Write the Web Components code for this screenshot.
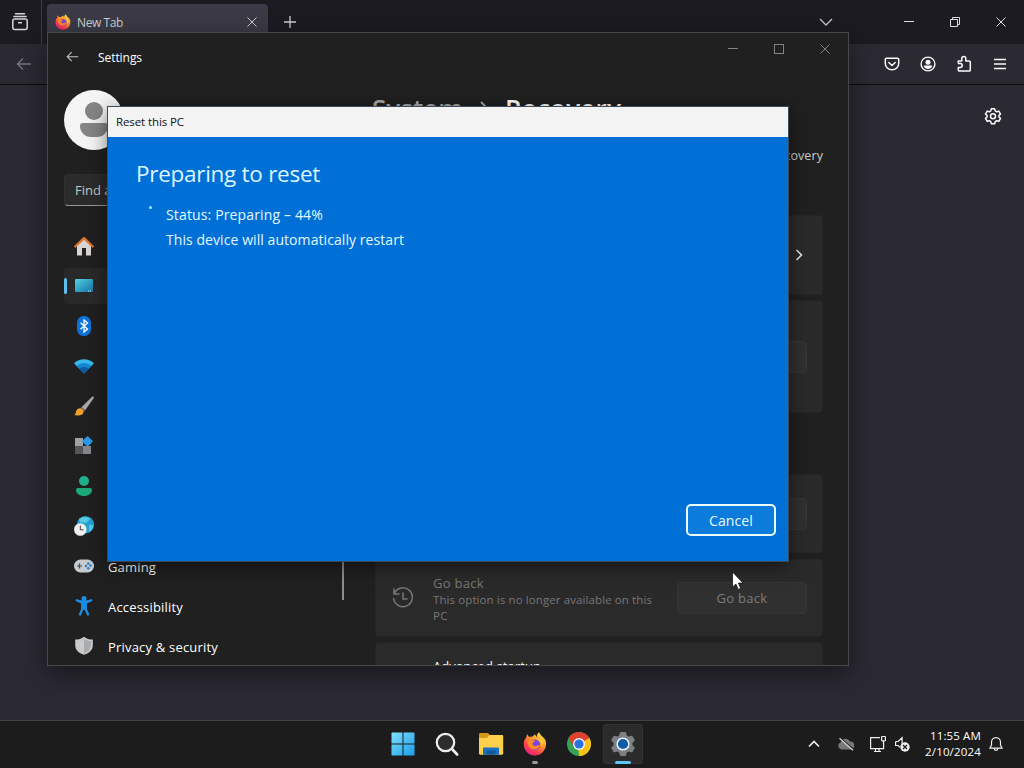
<!DOCTYPE html>
<html lang="en">
<head>
<meta charset="utf-8">
<title>Reset this PC</title>
<style>
  html, body { margin: 0; height: 100%; overflow: hidden; background: #2b2a33; }
  body { font-family: "Open Sans", "Noto Sans", sans-serif; font-size: 13px; color: #fff; }
</style>
</head>
<body>
<desk-top></desk-top>

<script>
const ICONS = {
  // browser chrome
  library: [18, 18, `<g fill="none" stroke="#d5d5da" stroke-width="1.5"><rect x="1.8" y="6" width="14.4" height="10.6" rx="2"/><path d="M3 3.500h12M4.500.8h9" stroke-linecap="round"/><path d="M7 9.700h4"/></g>`],
  back: [16, 14, `<path d="M15 7H1.500M7 1.500 1.500 7 7 12.500" fill="none" stroke="currentColor" stroke-width="1.300"/>`],
  close: [12, 12, `<path d="M1.500 1.500l9 9M10.500 1.500l-9 9" fill="none" stroke="currentColor"/>`],
  plus: [14, 14, `<path d="M7 1v12M1 7h12" fill="none" stroke="#d0d0d5" stroke-width="1.300"/>`],
  down: [14, 8, `<path d="M1 1l6 6 6-6" fill="none" stroke="#c8c8cd" stroke-width="1.300"/>`],
  min: [10, 10, `<path d="M0 4.500h10" stroke="currentColor"/>`],
  max: [10, 10, `<rect x=".5" y=".5" width="9" height="9" fill="none" stroke="currentColor"/>`],
  restore: [10, 10, `<path d="M.5 2.500h7v7h-7zM2.500 2.500v-2h7v7h-2" fill="none" stroke="currentColor"/>`],
  pocket: [16, 16, `<g fill="none" stroke="#fbfbfe" stroke-width="1.500" stroke-linecap="round" stroke-linejoin="round"><path d="M2.600 2.200h10.800c.7 0 1.300.6 1.300 1.300V7.500a6.700 6.300 0 0 1-13.400 0v-4c0-.7.6-1.300 1.300-1.300z"/><path d="M4.800 6.500 8 9.500l3.200-3"/></g>`],
  account: [16, 16, `<circle cx="8" cy="8" r="6.900" fill="none" stroke="#fbfbfe" stroke-width="1.400"/><circle cx="8" cy="6.200" r="2.500" fill="#fbfbfe"/><path d="M3.700 9.500h8.600c-.3 2.200-2.200 3.500-4.300 3.500S4 11.700 3.700 9.500z" fill="#fbfbfe"/>`],
  puzzle: [16, 18, `<path d="M2.300 8.500V5.900h3.500V3.500a2 2 0 0 1 4 0v2.400h3.300c.7 0 1.200.5 1.200 1.200v7.800c0 .7-.5 1.200-1.200 1.200H3.500c-.7 0-1.200-.5-1.200-1.200v-2.500h2a1.900 1.900 0 0 0 0-3.800H1.900" fill="none" stroke="#fbfbfe" stroke-width="1.500" stroke-linejoin="round"/>`],
  menu: [14, 12, `<path d="M1 1.500h12M1 6h12M1 10.500h12" stroke="#fbfbfe" stroke-width="1.400"/>`],
  gear: [18, 18, `<g fill="none" stroke="#fbfbfe" stroke-width="1.500" stroke-linejoin="round"><path d="M7.300 1.800h3.400l.5 2.100 1.500.9 2.100-.7 1.700 3-1.600 1.400v1.500l1.600 1.400-1.700 3-2.100-.7-1.500.9-.5 2.100H7.300l-.5-2.100-1.500-.9-2.100.7-1.700-3L3.100 10V8.500L1.500 7.100l1.700-3 2.100.7 1.500-.9z"/><circle cx="9" cy="9.200" r="2.500"/></g>`],
  firefox: [24, 24, `
    <defs><linearGradient id="f" x1=".85" y1="0" x2=".2" y2="1"><stop offset="0" stop-color="#ffe64d"/><stop offset=".4" stop-color="#ff9a2b"/><stop offset=".7" stop-color="#ff4548"/><stop offset="1" stop-color="#e8168c"/></linearGradient></defs>
    <path d="M3.300 5.500c.1-1.700.8-2.800 1.400-3.200.2 1.300.7 2 1.500 2.600 1-.3 2-.3 3-.1C10.500 3 12 2.600 12.500 2.400c0 1.300.4 2 1.300 2.600C13.600 2.800 14.800 1 16.500.3c.2 3.500 5.200 4.800 6.300 9C24.300 16 19.500 23.500 12 23.500S.2 17 .8 11.200C1 8.800 2 6.600 3.300 5.500z" fill="url(#f)"/>
    <circle cx="11.800" cy="12.700" r="5.300" fill="#7542e5"/>
    <path d="M4.700 8.500c2.700-1.600 5 .2 7.600.2-.4 1.500-2.300 1.400-2.800 2.800-.3 1.500 1.300 2.700 2.900 2.500 2-.2 2.700-1.500 4.500-1-1 4.600-6.300 5.500-9 3.500C5.200 14.800 4.200 11.500 4.700 8.500z" fill="#ff8a25"/>
    <path d="M14.500 7.200c3.500.8 4.700 4.200 3.300 7.300 1.500-.8 2.500-2.600 2.300-4.500-.3-1.800-2.700-3.700-5.600-2.800z" fill="#ffd43b"/>`],

  // settings navigation
  home: [20, 20, `<path d="M3 9l7-6.500L17 9v10.500h-5V13H8v6.500H3z" fill="#d8d6d4"/><path d="M8 12h4v7.500H8z" fill="#26221f"/><path d="M1.300 10.500 10 2.200l8.700 8.300" fill="none" stroke="#dd752f" stroke-width="2.400" stroke-linecap="round" stroke-linejoin="round"/>`],
  system: [20, 20, `<defs><linearGradient id="s" x2="1" y2="1"><stop stop-color="#51d2e4"/><stop offset="1" stop-color="#1474a8"/></linearGradient></defs><rect x="1" y="3" width="18" height="13" rx="1.200" fill="url(#s)"/><path d="M14 15h1m1 0h1" stroke="#d3f4ff"/>`],
  bluetooth: [20, 20, `<rect x="3" y="0" width="14" height="20" rx="6.500" fill="#0d73dc"/><path d="M6.500 6.800l7 6.200-3.500 3V4l3.500 3-7 6.200" fill="none" stroke="#fff" stroke-width="1.300"/>`],
  wifi: [20, 20, `<path d="M0 7.200C5.500 2 14.500 2 20 7.200L10 17.500z" fill="#36b9ed"/><path d="M2.700 10C7 6.100 13 6.100 17.300 10L10 17.500z" fill="#1687d3"/><path d="M5.300 12.700c2.800-2.300 6.600-2.300 9.400 0L10 17.500z" fill="#0b5ca6"/>`],
  brush: [20, 20, `<path d="M18.300.6c1.200-.5 1.900.5 1.300 1.600L11 14.500 7.500 11.300z" fill="#a9a9aa"/><path d="M7.500 11l3.500 3.300-1.300 1.600-3.600-3.400z" fill="#6b6664"/><path d="M6.200 12.200c2 .3 3.500 2 3.300 4-.3 2.900-4.600 3.900-9.300 2.900 1.800-.7 1.300-2 2-4 .6-1.800 2-3 4-2.900z" fill="#eea22e"/>`],
  apps: [20, 20, `<path d="M1 2h8v8H1z" fill="#a0a1a5"/><path d="M1 10h8v8H1z" fill="#54565c"/><path d="M9 10h8v8H9z" fill="#85878d"/><path d="M13.500 1l4.500 4.200-4.500 4.600L9 5.200z" fill="#2b9ae9" stroke="#2b9ae9" stroke-width="1.500" stroke-linejoin="round"/>`],
  person: [20, 20, `<circle cx="10" cy="5" r="5" fill="#24b08d"/><path d="M4 12h12c1.200 0 2 .8 2 2 0 3.600-3.500 6-8 6s-8-2.400-8-6c0-1.200.8-2 2-2z" fill="#1da97c"/>`],
  time: [20, 20, `<circle cx="11.500" cy="8.700" r="8.700" fill="#22a0d2"/><path d="M5 3c4-3.500 9-2 11 0l-4 4-6-1zM15 9l4 0c0 4-2 6-4 7z" fill="#56cbe2"/><circle cx="6.300" cy="13.500" r="6.300" fill="#efefef"/><path d="M6.300 9.500v4.300h3.200" fill="none" stroke="#444"/>`],
  gaming: [20, 20, `<rect x="0" y="3.500" width="20" height="13" rx="6.500" fill="#c6cbd0"/><path d="M3 10h5M5.500 7.500v5" stroke="#44484d" stroke-width="1.200"/><g fill="#257bc5"><circle cx="12" cy="10" r="1.200"/><circle cx="16.500" cy="9.500" r="1.200"/><circle cx="14.300" cy="7.500" r="1.200"/><circle cx="14.300" cy="12.200" r="1.200"/></g>`],
  access: [20, 20, `<circle cx="10" cy="2.600" r="2.500" fill="#1c8de0"/><path d="M2.800 4.200 8 6.600h4l5.200-2.400M8.200 6.500h3.600v6H8.200zM9 11.500 6 18.500M11 11.500l3 7" fill="#1c8de0" stroke="#1c8de0" stroke-width="2.300" stroke-linecap="round"/>`],
  shield: [20, 20, `<path d="M10 .8c2.500 2 5.300 2.800 8.800 2.800V9c0 5-3.300 8-8.800 9.800C4.500 17 1.200 14 1.200 9V3.600C4.700 3.600 7.500 2.800 10 .8z" fill="#c9cacc"/><path d="M10 2.800c2 1.500 4.300 2.300 7 2.300V9c0 4-2.500 6.500-7 8.100z" fill="#a9abad"/>`],
  history: [22, 22, `<g fill="none" stroke="#777" stroke-width="1.500" stroke-linecap="round" stroke-linejoin="round"><path d="M2.300 6.500A9.400 9.400 0 1 1 1.600 11.500M2 2v5h5M11 6v6h4"/></g>`],
  right: [8, 12, `<path d="M1.500 1l5 5-5 5" fill="none" stroke="#e4e4e4" stroke-width="1.600"/>`],
  crumb: [8, 14, `<path d="M1 1l6 6-6 6" fill="none" stroke="#aaa" stroke-width="1.800"/>`],

  // taskbar
  start: [24, 24, `<defs><linearGradient id="w" x2="1" y2="1" gradientUnits="userSpaceOnUse" gradientTransform="scale(24)"><stop stop-color="#83e2fb"/><stop offset="1" stop-color="#169bea"/></linearGradient></defs><path d="M1 .5h10.500V11.500H.5V1zM12.500.5H23l.5.5v10.500h-11zM.5 12.500h11v11H1l-.5-.5zM12.500 12.500h11V23l-.5.5H12.500z" fill="url(#w)"/>`],
  search: [24, 24, `<circle cx="10.500" cy="10.500" r="8.700" fill="#2b2c2d" stroke="#eee" stroke-width="2.200"/><path d="M17 17l5.200 5.500" stroke="#eee" stroke-width="2.600" stroke-linecap="round"/>`],
  folder: [26, 24, `<path d="M1 2.500c0-.8.500-1.500 1.300-1.500h7c.8 0 1.300.4 1.700 1l1 1.500V8H1z" fill="#d59a15"/><path d="M1 6h8l2.500-3H24c.8 0 1.200.5 1.200 1.200v17.300c0 .8-.5 1.200-1.200 1.200H2.200c-.7 0-1.200-.4-1.200-1.200z" fill="#fdcf4b"/><path d="M6 15.500h14c.6 0 1 .4 1 1v6.200H5v-6.200c0-.6.400-1 1-1z" fill="#1970bd"/><path d="M8.500 18.500h9v4h-9z" fill="#145997"/>`],
  chrome: [24, 24, `<circle cx="12" cy="12" r="12" fill="#33a453"/><path d="M1.600 6A12 12 0 0 1 22.400 6L12 12z" fill="#e0412f"/><path d="M22.400 6A12 12 0 0 1 12 24l-.5-6L12 12V6z" fill="#fbc116"/><path d="M1.600 6 6.800 15 12 12 22.400 6z" fill="#e0412f"/><circle cx="12" cy="12" r="6" fill="#f4f5f7"/><circle cx="12" cy="12" r="4.600" fill="#2b72df"/>`],
  cog: [24, 24, `<path d="M9.500.5h5l.8 3.200 2.400 1.400 3.200-1 2.500 4.300L21 10.700v2.700l2.400 2.300-2.500 4.300-3.200-1-2.400 1.400-.8 3.200h-5l-.8-3.200L6.300 19l-3.200 1L.6 15.700 3 13.400v-2.700L.6 8.400l2.500-4.300 3.200 1 2.400-1.400z" fill="#7e8184" stroke="#7e8184" stroke-linejoin="round"/><circle cx="12" cy="12" r="6.600" fill="#e8f3fa"/><circle cx="12" cy="12" r="5.100" fill="#115da5"/>`],
  up: [12, 8, `<path d="M1 6.500l5-5 5 5" fill="none" stroke="#eee" stroke-width="1.600"/>`],
  cloud: [18, 14, `<path d="M4.500 12.500A3.800 3.800 0 0 1 3.800 5.200 5 5 0 0 1 13 4.500a4 4 0 0 1 .5 8z" fill="#777"/><path d="M3 .7l14 12" stroke="#1c1c1c" stroke-width="1.500"/><path d="M2.500 1.200l13.500 12" stroke="#d5d5d5" stroke-width="1.200"/>`],
  network: [18, 18, `<g fill="none" stroke="#eee" stroke-width="1.200"><path d="M11 2.600H1.600v11h13V8.500M5 16.500h7M6.500 14v2.500M10 14v2.500"/><rect x="12.600" y="1.500" width="3.800" height="4.300" rx=".5"/><path d="M14.500 6v3"/></g>`],
  mute: [18, 18, `<path d="M1.600 6.500h2.500l4-3.800v9.500M1.600 6.500v4h2.500l2 1.900" fill="none" stroke="#eee" stroke-width="1.200"/><circle cx="11" cy="12" r="4.700" fill="#eee"/><path d="M9 10l4 4M13 10l-4 4" stroke="#1c1c1c" stroke-width="1.200"/>`],
  bell: [16, 16, `<path d="M8 1.700c-2.700 0-4.500 2-4.500 4.600v3L1.800 12.200h12.400l-1.700-2.900v-3c0-2.600-1.800-4.600-4.500-4.600zM6.200 12.500c0 2.400 3.600 2.400 3.600 0" fill="none" stroke="#eee" stroke-width="1.200" stroke-linejoin="round"/>`],
  pointer: [13, 20, `<path d="M1.500 1v15.300l3.400-3.200 2.300 5.300 2.500-1.100-2.300-5.200h4.700z" fill="#fff" stroke="#111" stroke-width=".8"/>`],
};

class BaseElement extends HTMLElement {
  constructor() {
    super();
    this.attachShadow({ mode: 'open' });
  }
  connectedCallback() { this.render(); }
}

class UiIcon extends BaseElement {
  render() {
    const [w, h, body] = ICONS[this.getAttribute('name')];
    const width = Number(this.getAttribute('size')) || w;
    this.shadowRoot.innerHTML = `
      <style>
        :host { display: inline-flex; flex: none; align-items: center; justify-content: center; }
        svg { display: block; overflow: visible; }
      </style>
      <svg width="${width}" height="${width * h / w}" viewBox="0 0 ${w} ${h}">${body}</svg>
    `;
  }
}
customElements.define('ui-icon', UiIcon);

// single line of text, tracked so it takes data-fit pixels
class UiLabel extends BaseElement {
  render() {
    this.shadowRoot.innerHTML = `
      <style>:host { display: inline-block; flex: none; white-space: nowrap; }</style>
      <slot></slot>
    `;
    const fit = Number(this.dataset.fit);
    if (!fit) return;
    this.style.letterSpacing = '0';
    const natural = this.getBoundingClientRect().width;
    this.style.letterSpacing = `${(fit - natural) / this.textContent.length}px`;
  }
}
customElements.define('ui-label', UiLabel);

class CaptionButtons extends BaseElement {
  render() {
    const middle = this.getAttribute('middle') || 'max';
    this.shadowRoot.innerHTML = `
      <style>
        :host { display: flex; flex: none; }
        ui-icon { width: 46px; height: 100%; }
      </style>
      <ui-icon name="min"></ui-icon><ui-icon name="${middle}"></ui-icon><ui-icon name="close"></ui-icon>
    `;
  }
}
customElements.define('caption-buttons', CaptionButtons);

class BrowserWindow extends BaseElement {
  render() {
    this.shadowRoot.innerHTML = `
      <style>
        :host { display: flex; flex-direction: column; background: #2b2a33; }
        .tabs { display: flex; height: 44px; background: #1c1b22; color: #d0d0d4; }
        .view { width: 42px; padding-right: 2px; box-sizing: border-box; border-right: 1px solid #3d3c44; }
        .tab {
          display: flex; align-items: center; width: 221px; height: 36px; box-sizing: border-box;
          margin: 4px 0 0 5px; padding: 0 10px 0 8px; border-radius: 4px; background: #3b3a46;
        }
        .tab ui-label { margin: 0 auto 0 6px; padding-top: 1px; font-size: 12px; }
        .plus { width: 44px; }
        .list { margin-left: auto; width: 40px; }
        caption-buttons { margin-left: 40px; color: #dcdce0; }
        .bar {
          display: flex; align-items: center; height: 40px; padding: 0 16px;
          border-bottom: 1px solid #0c0c0d; color: #77767f;
        }
        .tools { display: flex; margin-left: auto; margin-right: -10px; }
        .tools ui-icon { width: 36px; }
        .page { display: flex; justify-content: flex-end; padding: 22px 22px 0 0; }
      </style>
      <div class="tabs">
        <ui-icon class="view" name="library"></ui-icon>
        <div class="tab">
          <ui-icon name="firefox" size="16"></ui-icon>
          <ui-label data-fit="46">New Tab</ui-label>
          <ui-icon name="close"></ui-icon>
        </div>
        <ui-icon class="plus" name="plus"></ui-icon>
        <ui-icon class="list" name="down"></ui-icon>
        <caption-buttons middle="restore"></caption-buttons>
      </div>
      <div class="bar">
        <ui-icon name="back"></ui-icon>
        <div class="tools">
          <ui-icon name="pocket"></ui-icon><ui-icon name="account"></ui-icon>
          <ui-icon name="puzzle"></ui-icon><ui-icon name="menu"></ui-icon>
        </div>
      </div>
      <div class="page"><ui-icon name="gear"></ui-icon></div>
    `;
  }
}
customElements.define('browser-window', BrowserWindow);

class NavItem extends BaseElement {
  render() {
    this.shadowRoot.innerHTML = `
      <style>
        :host { display: flex; align-items: center; height: 36px; border-radius: 4px; font-size: 13px; }
        :host([selected]) { background: #292929; }
        .mark { width: 3px; height: 16px; border-radius: 2px; margin-right: 7px; }
        :host([selected]) .mark { background: #5fc0f0; }
        .text { margin-left: 14px; padding-top: 1px; }
      </style>
      <span class="mark"></span>
      <ui-icon name="${this.getAttribute('icon')}" size="20"></ui-icon>
      <span class="text"><slot></slot></span>
    `;
  }
}
customElements.define('nav-item', NavItem);

class SettingCard extends BaseElement {
  render() {
    this.shadowRoot.innerHTML = `
      <style>
        :host {
          display: flex; align-items: center; box-sizing: border-box; flex: none;
          padding: 0 15px 0 16px; border: 1px solid #262626; border-radius: 4px; background: #2a2a2a;
        }
        .text { flex: 1; padding-left: 19px; }
      </style>
      <slot name="icon"></slot>
      <div class="text"><slot></slot></div>
      <slot name="action"></slot>
    `;
  }
}
customElements.define('setting-card', SettingCard);

class SettingsWindow extends BaseElement {
  render() {
    this.shadowRoot.innerHTML = `
      <style>
        :host {
          display: flex; flex-direction: column; box-sizing: border-box; overflow: hidden;
          border: 1px solid #48484a; background: #202020; box-shadow: 0 8px 26px rgba(0, 0, 0, .45);
        }
        header { display: flex; height: 48px; flex: none; }
        header > ui-icon { width: 48px; color: #c6c6c6; }
        header > ui-label { align-self: center; margin-left: 2px; padding-top: 2px; font-size: 12px; line-height: 16px; }
        caption-buttons { height: 32px; margin-left: auto; color: #828282; }
        .body { display: flex; height: 584px; overflow: hidden; }
        aside { width: 296px; box-sizing: border-box; padding: 9px 0 0 16px; flex: none; }
        .avatar {
          display: flex; flex-direction: column; align-items: center; gap: 3px; width: 60px; height: 60px;
          box-sizing: border-box; padding-top: 12px; border-radius: 50%; background: #f5f5f5;
        }
        .avatar::before { content: ""; width: 18px; height: 18px; border-radius: 50%; background: #858585; }
        .avatar::after { content: ""; width: 28px; height: 14px; border-radius: 4px 4px 14px 14px; background: #858585; }
        .find {
          display: flex; align-items: center; box-sizing: border-box; height: 32px; width: 270px; margin: 24px 0 22px;
          padding-left: 10px; border: 1px solid #303030; border-bottom-color: #999; border-radius: 4px;
          background: #2b2b2b; color: #c6c6c6; font-size: 13px;
        }
        .list { display: flex; justify-content: space-between; height: 437px; }
        nav { display: flex; flex-direction: column; gap: 4px; width: 262px; }
        .bar { width: 2px; height: 372px; background: #8d8d8d; }
        main { display: flex; flex-direction: column; width: 448px; margin-left: 31px; }
        h1 { display: flex; margin: 8px 0 0 -3px; height: 38px; line-height: 38px; font-size: 26px; font-weight: 600; }
        h1 .dim { color: #aaa; }
        h1 ui-icon { width: 42px; }
        .lead { margin-top: 19px; height: 20px; line-height: 20px; margin-bottom: 49px; text-align: right; font-size: 12.5px; color: #ccc; }
        .title { font-size: 13px; line-height: 18px; }
        .note { font-size: 11.5px; line-height: 16px; }
        .off { color: #777; }
        .btn {
          display: flex; align-items: center; justify-content: center; box-sizing: border-box; width: 130px; height: 32px;
          border: 1px solid #363636; border-radius: 4px; background: #303030; color: #7c7c7c; font-size: 13px;
        }
      </style>
      <header>
        <ui-icon name="back" size="13"></ui-icon>
        <ui-label data-fit="44">Settings</ui-label>
        <caption-buttons></caption-buttons>
      </header>
      <div class="body">
        <aside>
          <div class="avatar"></div>
          <div class="find">Find a</div>
          <div class="list">
            <nav>
              <nav-item icon="home"></nav-item>
              <nav-item icon="system" selected></nav-item>
              <nav-item icon="bluetooth"></nav-item>
              <nav-item icon="wifi"></nav-item>
              <nav-item icon="brush"></nav-item>
              <nav-item icon="apps"></nav-item>
              <nav-item icon="person"></nav-item>
              <nav-item icon="time"></nav-item>
              <nav-item icon="gaming"><ui-label data-fit="48">Gaming</ui-label></nav-item>
              <nav-item icon="access"><ui-label data-fit="75">Accessibility</ui-label></nav-item>
              <nav-item icon="shield"><ui-label data-fit="110">Privacy &amp; security</ui-label></nav-item>
            </nav>
            <div class="bar"></div>
          </div>
        </aside>
        <main>
          <h1><ui-label class="dim" data-fit="91">System</ui-label><ui-icon name="crumb"></ui-icon><ui-label data-fit="116">Recovery</ui-label></h1>
          <div class="lead"><ui-label data-fit="51">recovery</ui-label></div>
          <setting-card style="height: 80px; margin-bottom: 5px"><ui-icon slot="action" name="right" style="margin-right: 4px"></ui-icon></setting-card>
          <setting-card style="height: 113px; margin-bottom: 61px"><span slot="action" class="btn"></span></setting-card>
          <setting-card style="height: 79px; margin-bottom: 6px"><span slot="action" class="btn"></span></setting-card>
          <setting-card style="height: 78px; margin-bottom: 5px">
            <ui-icon slot="icon" name="history"></ui-icon>
            <div class="title off" style="padding-top: 1px"><ui-label data-fit="51">Go back</ui-label></div>
            <div class="note off"><ui-label data-fit="219">This option is no longer available on this</ui-label><br><ui-label data-fit="15">PC</ui-label></div>
            <span slot="action" class="btn"><ui-label data-fit="51">Go back</ui-label></span>
          </setting-card>
          <setting-card style="height: 78px; align-items: flex-start; padding-top: 14px">
            <div class="title" style="padding-left: 22px"><ui-label data-fit="108">Advanced startup</ui-label></div>
          </setting-card>
        </main>
      </div>
    `;
  }
}
customElements.define('settings-window', SettingsWindow);

class ResetDialog extends BaseElement {
  render() {
    this.shadowRoot.innerHTML = `
      <style>
        :host {
          display: flex; flex-direction: column; box-sizing: border-box; border: 1px solid #3a4a58;
          background: #0070d7; box-shadow: 0 4px 18px rgba(0, 0, 0, .5);
        }
        header { height: 30px; line-height: 29px; padding-left: 8px; background: #f3f3f3; color: #111; font-size: 11.5px; }
        .body { display: flex; flex-direction: column; flex: 1; padding: 19px 12px 25px 28px; }
        h2 { margin: 0; height: 34px; line-height: 35px; font-size: 22.5px; font-weight: 400; color: #dcf5ff; }
        .status { display: flex; margin-top: 12px; font-size: 14px; line-height: 25px; color: #e4f8ff; }
        .dot { width: 3px; height: 3px; margin: 4px 14px 0 13px; border-radius: 50%; background: #a5eeff; }
        button {
          margin: auto 0 0 auto; width: 90px; height: 32px; padding: 0; border: 2px solid #e9fbff; border-radius: 5px;
          background: #0b7bdc; color: #e9fbff; font: inherit; font-size: 14px;
        }
      </style>
      <header><ui-label data-fit="68">Reset this PC</ui-label></header>
      <div class="body">
        <h2><ui-label data-fit="184">Preparing to reset</ui-label></h2>
        <div class="status">
          <span class="dot"></span>
          <div>
            <ui-label data-fit="157">Status: Preparing – 44%</ui-label><br>
            <ui-label data-fit="238">This device will automatically restart</ui-label>
          </div>
        </div>
        <button><ui-label data-fit="44">Cancel</ui-label></button>
      </div>
    `;
  }
}
customElements.define('reset-dialog', ResetDialog);

class TaskBar extends BaseElement {
  render() {
    this.shadowRoot.innerHTML = `
      <style>
        :host {
          display: grid; grid-template-columns: 1fr auto 1fr; box-sizing: border-box; height: 48px;
          border-top: 1px solid #434347; background: #1c1c1c;
        }
        .apps { grid-column: 2; display: flex; gap: 4px; align-items: center; padding: 0 0 1px 1px; }
        .app {
          display: grid; grid-template-rows: 1fr 3px; justify-items: center; box-sizing: border-box;
          width: 40px; height: 40px; padding-top: 3px; border-radius: 4px;
        }
        .app.on { background: #2b2b2c; box-shadow: inset 0 0 0 1px #333; }
        .app::after { content: ""; border-radius: 2px; }
        .app.open::after { width: 6px; background: #999; }
        .app.on::after { width: 16px; background: #60c5f5; }
        .tray { display: flex; align-items: center; justify-content: flex-end; padding: 0 20px 2px 0; }
        .clock { display: flex; flex-direction: column; align-items: flex-end; margin: 0 7px 0 13px; font-size: 11.5px; line-height: 16px; }
      </style>
      <div class="apps">
        <div class="app"><ui-icon name="start"></ui-icon></div>
        <div class="app"><ui-icon name="search"></ui-icon></div>
        <div class="app"><ui-icon name="folder"></ui-icon></div>
        <div class="app open"><ui-icon name="firefox"></ui-icon></div>
        <div class="app"><ui-icon name="chrome"></ui-icon></div>
        <div class="app on"><ui-icon name="cog"></ui-icon></div>
      </div>
      <div class="tray">
        <ui-icon name="up" style="width: 32px"></ui-icon>
        <ui-icon name="cloud" style="width: 32px"></ui-icon>
        <ui-icon name="network" style="width: 32px"></ui-icon>
        <ui-icon name="mute"></ui-icon>
        <div class="clock"><ui-label data-fit="51">11:55 AM</ui-label><ui-label data-fit="56">2/10/2024</ui-label></div>
        <ui-icon name="bell"></ui-icon>
      </div>
    `;
  }
}
customElements.define('task-bar', TaskBar);

class DeskTop extends BaseElement {
  render() {
    this.shadowRoot.innerHTML = `
      <style>
        :host { display: flex; flex-direction: column; position: relative; width: 1024px; height: 768px; overflow: hidden; }
        browser-window { flex: 1; }
        settings-window { position: absolute; left: 47px; top: 32px; width: 802px; height: 634px; }
        reset-dialog { position: absolute; left: 107px; top: 106px; width: 682px; height: 456px; }
        .pointer { position: absolute; left: 731px; top: 571px; }
      </style>
      <browser-window></browser-window>
      <task-bar></task-bar>
      <settings-window></settings-window>
      <reset-dialog></reset-dialog>
      <ui-icon class="pointer" name="pointer"></ui-icon>
    `;
  }
}
customElements.define('desk-top', DeskTop);
</script>
</body>
</html>
